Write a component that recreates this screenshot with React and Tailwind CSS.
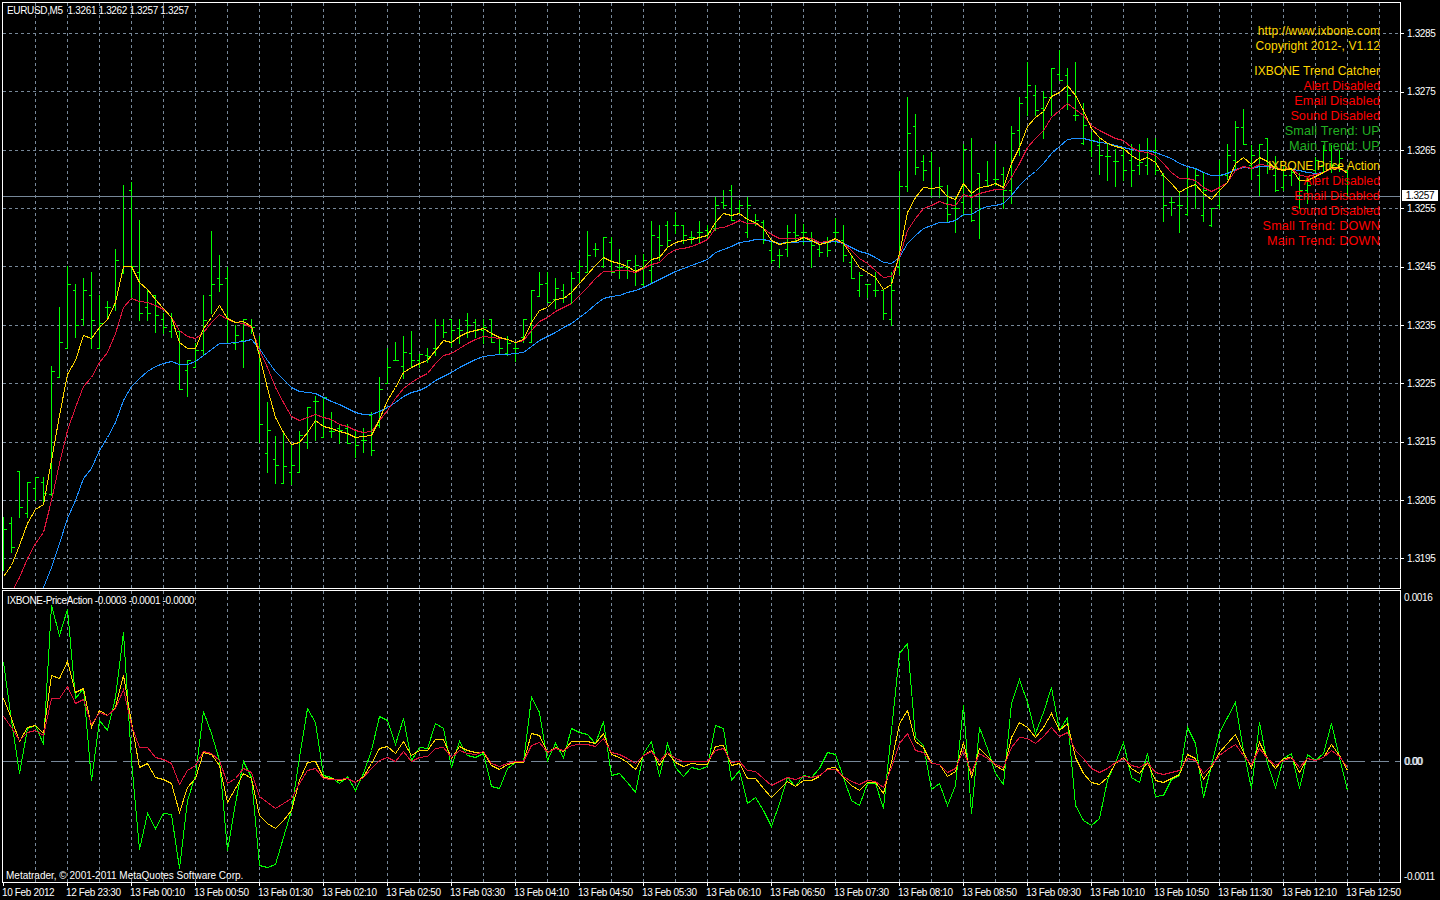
const TIMES = ['10 Feb 2012', '12 Feb 23:30', '13 Feb 00:10', '13 Feb 00:50', '13 Feb 01:30', '13 Feb 02:10', '13 Feb 02:50', '13 Feb 03:30', '13 Feb 04:10', '13 Feb 04:50', '13 Feb 05:30', '13 Feb 06:10', '13 Feb 06:50', '13 Feb 07:30', '13 Feb 08:10', '13 Feb 08:50', '13 Feb 09:30', '13 Feb 10:10', '13 Feb 10:50', '13 Feb 11:30', '13 Feb 12:10', '13 Feb 12:50']
const PRICES = ['1.3285', '1.3275', '1.3265', '1.3255', '1.3245', '1.3235', '1.3225', '1.3215', '1.3205', '1.3195']

const INFO = [
  { t: 'http://www.ixbone.com', c: 'text-[#ffd700] tracking-[0.1px]' },
  { t: 'Copyright 2012-, V1.12', c: 'text-[#ffd700] tracking-[0.05px] mb-[10px]' },
  { t: 'IXBONE Trend Catcher', c: 'text-[#ffd700] tracking-[0.05px]' },
  { t: 'Alert Disabled', c: 'text-[#ff0000] text-[12.3px]' },
  { t: 'Email Disabled', c: 'text-[#ff0000] text-[12.7px] tracking-[0.08px]' },
  { t: 'Sound Disabled', c: 'text-[#ff0000] text-[12.7px]' },
  { t: 'Small Trend: UP', c: 'text-[#22b022] text-[12.7px] tracking-[0.2px]' },
  { t: 'Main Trend: UP', c: 'text-[#22b022] text-[12.7px] tracking-[0.2px] mb-[5px]' },
  { t: 'IXBONE Price Action', c: 'text-[#ffd700]' },
  { t: 'Alert Disabled', c: 'text-[#ff0000] text-[12.3px]' },
  { t: 'Email Disabled', c: 'text-[#ff0000] text-[12.7px] tracking-[0.08px]' },
  { t: 'Sound Disabled', c: 'text-[#ff0000] text-[12.7px]' },
  { t: 'Small Trend: DOWN', c: 'text-[#ff0000] text-[12.7px] tracking-[0.15px]' },
  { t: 'Main Trend: DOWN', c: 'text-[#ff0000] text-[12.7px] tracking-[0.15px]' },
]

// high, low, left tick, right tick (pixel rows)
const BARS = [
  [517,570,569,529],[517,552,523,547],[471,517,471,507],[482,517,513,482],[477,500,488,477],[477,503,482,493],[366,495,494,371],[307,377,377,342],
  [266,348,348,284],[284,337,290,325],[278,325,319,290],[272,348,295,320],[295,348,348,323],[301,319,307,307],[249,310,305,260],[185,273,273,266],
  [182,298,190,266],[220,320,272,313],[289,320,307,313],[295,332,295,315],[313,333,319,327],[313,337,331,325],[331,389,331,389],[360,396,370,360],
  [343,367,367,350],[295,355,350,320],[231,313,295,284],[255,291,278,284],[267,343,278,343],[325,349,343,335],[319,367,340,319],[319,333,325,327],
  [336,442,350,424],[402,472,453,430],[436,483,459,465],[432,483,483,466],[444,484,472,465],[431,472,472,435],[407,448,442,407],[396,440,401,401],
  [397,437,437,397],[412,437,431,431],[424,443,428,430],[424,443,428,443],[431,457,436,445],[428,452,440,440],[412,455,415,450],[377,427,425,389],
  [348,383,383,367],[342,360,360,360],[336,378,366,352],[331,367,353,360],[354,367,360,354],[348,362,355,356],[319,355,348,325],[319,337,325,332],
  [319,346,319,330],[319,343,328,330],[313,337,320,325],[319,337,322,330],[319,343,330,327],[319,342,319,342],[337,354,338,348],[336,355,353,343],
  [342,361,348,348],[319,342,337,319],[290,342,342,290],[272,296,296,284],[272,302,283,302],[278,308,299,288],[284,302,290,297],[272,303,293,278],
  [260,282,272,266],[231,272,272,255],[243,256,249,249],[237,267,266,237],[237,272,242,272],[249,278,267,267],[260,278,267,260],[255,285,272,265],
  [254,285,284,260],[221,283,270,235],[225,260,237,245],[221,247,225,240],[212,233,225,225],[225,243,225,235],[231,243,237,237],[221,243,232,232],
  [225,237,230,232],[196,230,228,205],[190,208,202,205],[185,220,190,220],[200,213,208,205],[197,237,232,205],[214,225,222,220],[220,243,222,240],
  [240,262,250,260],[249,267,255,255],[225,256,249,232],[214,242,232,235],[224,244,232,232],[232,267,240,245],[244,256,249,252],[237,256,242,250],
  [218,243,232,232],[225,261,240,255],[255,278,262,278],[272,296,290,275],[284,297,284,284],[272,296,290,290],[289,319,290,313],[272,325,319,290],
  [171,274,267,186],[97,191,186,133],[114,174,126,167],[155,180,161,170],[152,197,161,188],[167,197,187,186],[185,221,203,214],[197,232,208,208],
  [144,215,202,149],[138,221,195,220],[173,238,173,208],[161,186,180,185],[144,185,179,179],[167,208,174,190],[126,203,190,133],[97,155,130,103],
  [62,115,97,85],[85,115,95,110],[91,138,108,97],[68,115,97,68],[50,80,74,80],[68,109,75,95],[62,120,115,115],[103,144,143,125],
  [132,156,150,140],[137,174,145,155],[144,180,156,156],[149,186,161,161],[149,180,155,170],[144,186,160,170],[144,174,165,162],[138,174,165,150],
  [138,174,150,170],[173,221,175,205],[196,215,202,202],[191,232,205,205],[168,215,214,179],[168,208,185,175],[173,221,215,190],[208,226,225,208],
  [160,208,205,175],[144,179,175,155],[121,170,160,127],[109,144,127,144],[145,179,165,155],[144,196,175,144],[138,173,138,165],[156,191,175,190],
  [167,190,187,175],[168,185,175,172],[173,208,178,190],[178,203,190,185],[157,173,170,160],[145,172,165,150],[145,172,150,165],[150,171,165,158],
  [170,197,170,196],
]

const MA_YELLOW = [576,565,545,523,509,504,460,415,374,360,335,338,327,319,302,266,266,282,289,299,308,317,342,348,348,328,317,305,318,322,321,326,355,388,417,432,444,442,432,420,426,428,431,433,437,436,435,419,400,387,372,367,363,360,350,340,342,336,332,330,328,333,337,339,342,339,322,310,307,299,298,292,283,274,265,257,261,263,266,271,267,259,257,247,242,240,239,237,235,222,213,215,213,219,222,228,240,244,242,241,237,240,244,242,238,243,255,267,272,277,289,284,253,212,197,187,188,187,196,199,183,193,187,186,183,187,163,147,126,117,111,96,92,85,95,110,128,137,143,146,148,155,160,157,162,175,183,192,187,184,193,199,190,182,163,157,164,157,161,168,170,168,180,180,176,172,167,167,173]
const MA_RED = [610,592,577,558,543,532,500,463,430,407,386,377,362,352,333,307,298,301,302,305,309,317,330,336,338,332,322,314,319,322,323,327,350,367,387,402,416,420,417,414,417,419,424,426,430,432,431,420,410,398,388,382,377,373,363,355,353,348,343,339,336,337,338,339,342,340,330,321,317,311,307,303,295,287,278,271,271,270,270,272,268,264,262,254,249,248,246,243,239,228,227,224,220,223,223,228,234,238,238,238,237,238,242,241,239,243,250,258,263,270,277,276,257,230,218,208,205,201,204,205,194,197,193,191,189,189,177,163,147,138,130,117,110,103,109,115,125,130,134,138,140,147,151,152,155,163,172,178,178,180,187,191,187,182,170,166,168,164,165,168,169,168,175,176,174,172,168,168,172]
const MA_BLUE = [700,680,660,640,612,587,567,543,518,500,478,468,450,437,422,400,386,378,371,366,363,361,364,364,361,355,349,343,343,342,341,339,348,360,371,379,387,391,392,393,397,401,404,408,412,414,414,411,407,402,396,392,390,386,380,376,372,367,363,359,356,355,354,354,353,352,346,340,336,332,327,323,317,311,304,298,296,295,292,290,287,283,279,275,271,268,265,262,259,252,249,246,242,241,239,239,241,243,242,242,241,241,242,242,241,243,247,251,253,257,262,263,257,243,235,228,225,222,222,220,214,214,209,206,205,203,195,185,177,171,163,153,146,139,138,138,140,142,143,145,147,149,150,150,152,155,158,163,166,168,172,175,175,173,169,167,168,166,166,168,169,169,170,172,173,172,168,168,172]

const PA_GREEN = [662,720,773,728,725,744,605,635,609,698,688,780,720,730,697,632,760,849,813,828,813,814,868,800,775,711,733,760,850,803,761,777,865,867,864,837,810,757,708,722,775,777,783,776,790,773,750,716,720,744,718,760,747,748,723,728,767,741,755,757,753,786,788,768,762,762,697,712,760,743,757,728,732,734,743,721,775,773,782,792,753,741,776,743,767,776,767,769,766,725,728,780,770,803,797,810,826,803,777,786,775,777,768,752,754,777,800,805,783,783,808,730,653,643,737,745,789,783,805,785,705,813,727,748,773,784,703,679,702,733,712,687,730,717,805,820,825,818,780,762,742,777,782,753,796,795,779,775,727,743,797,765,732,717,702,750,788,722,763,787,758,753,788,754,760,753,723,757,790]
const PA_YELLOW = [698,718,741,727,725,733,675,678,661,692,688,727,710,715,707,675,722,767,763,777,779,783,812,787,778,752,754,765,802,788,773,778,815,823,828,820,810,780,762,761,777,778,780,778,782,776,763,748,746,753,741,755,750,750,739,739,758,746,750,752,752,765,769,764,762,762,733,735,752,747,751,741,741,741,743,733,754,757,762,769,755,750,765,752,762,766,763,764,764,746,745,765,763,778,778,788,797,789,781,786,780,780,776,768,767,777,785,790,782,782,793,762,723,710,741,747,763,764,776,771,742,777,748,756,765,770,737,722,727,737,727,713,730,723,757,773,782,784,777,763,757,768,773,762,780,782,778,774,754,758,779,767,752,743,734,752,767,742,758,768,758,757,772,758,760,757,744,755,770]
const PA_RED = [716,727,740,732,730,735,698,698,686,703,699,724,712,715,708,689,725,747,747,757,759,763,784,770,765,751,753,760,783,778,768,772,796,802,808,803,798,783,770,768,778,779,779,778,782,777,768,760,757,761,751,761,757,756,748,747,757,750,753,754,751,763,766,763,761,761,745,742,752,748,750,745,744,744,746,738,752,754,758,763,755,751,761,752,758,761,761,761,761,750,748,762,761,770,771,778,785,781,777,779,776,777,775,769,769,776,781,784,780,781,787,767,743,733,750,752,763,764,772,768,750,772,753,758,764,767,747,737,738,743,736,727,736,732,750,758,768,772,768,762,758,765,767,762,772,774,772,770,758,760,773,765,755,749,744,755,764,748,758,765,760,757,767,758,760,757,750,756,767]

const barX = (k) => 3 + 8 * k
const pts = (ys) => ys.map((y, k) => `${barX(k) + 0.5},${y + 0.5}`).join(' ')

const barsPath = BARS.map(([hi, lo, l, r], k) => {
  const x = barX(k) + 0.5
  return `M${x} ${hi}V${lo + 1}M${x - 2.5} ${l + 0.5}H${x}M${x} ${r + 0.5}H${x + 3}`
}).join('')

const VERTS = Array.from({ length: 43 }, (_, i) => 35 + 32 * i)
const HORIZ = [33, 91, 150, 208, 266, 325, 383, 442, 500, 558]

function Line({ ys, color }) {
  return <polyline points={pts(ys)} fill="none" stroke={color} strokeWidth="1" />
}

function MainChart() {
  return (
    <svg viewBox="3 3 1397 585" width="1397" height="585" shapeRendering="crispEdges" className="block">
      {VERTS.map((x) => <line key={x} x1={x + 0.5} x2={x + 0.5} y1="3" y2="588" stroke="#778899" strokeDasharray="3 3" />)}
      {HORIZ.map((y) => <line key={y} x1="3" x2="1400" y1={y + 0.5} y2={y + 0.5} stroke="#778899" strokeDasharray="3 3" />)}
      <path d={barsPath} fill="none" stroke="#00ff00" strokeWidth="1" />
      <line x1="3" x2="1400" y1="196.5" y2="196.5" stroke="#778899" />
      <Line ys={MA_BLUE} color="#1e90ff" />
      <Line ys={MA_RED} color="#dc143c" />
      <Line ys={MA_YELLOW} color="#ffd700" />
    </svg>
  )
}

function SubChart() {
  return (
    <svg viewBox="3 591 1397 291" width="1397" height="291" shapeRendering="crispEdges" className="block">
      {VERTS.map((x) => <line key={x} x1={x + 0.5} x2={x + 0.5} y1="591" y2="882" stroke="#778899" strokeDasharray="3 3" />)}
      <line x1="3" x2="1400" y1="761.5" y2="761.5" stroke="#778899" strokeDasharray="18 6" />
      <Line ys={PA_GREEN} color="#00ff00" />
      <Line ys={PA_YELLOW} color="#ffd700" />
      <Line ys={PA_RED} color="#dc143c" />
    </svg>
  )
}

export default function App() {
  return (
    <div className="w-[1440px] h-[900px] bg-black overflow-hidden text-white text-[10px] leading-[12px] [font-family:'Liberation_Sans',Arial,sans-serif]">
      <div className="flex h-[589px] pt-[2px] pl-[2px]">
        <div className="relative w-[1399px] h-[587px] border border-white">
          <MainChart />
          <div className="absolute left-[4px] top-[2px] tracking-[-0.35px]">EURUSD,M5 &nbsp;1.3261 1.3262 1.3257 1.3257</div>
          <div className="absolute right-[20px] top-[21px] flex flex-col items-end text-[12px] leading-[15px]">
            {INFO.map((row, i) => <div key={i} className={row.c}>{row.t}</div>)}
          </div>
        </div>
        <div className="relative w-[39px] pt-[2.83px] tracking-[-0.35px]">
          {PRICES.map((p) => (
            <div key={p} className="flex items-center h-[58.33px]">
              <span className="w-[3px] h-px bg-white mr-[3px]" />
              <span>{p}</span>
            </div>
          ))}
          <div className="absolute left-px top-[188px] w-[36px] h-[11px] bg-white text-black leading-[11px] text-center">1.3257</div>
        </div>
      </div>
      <div className="flex mt-px pl-[2px]">
        <div className="relative w-[1399px] h-[293px] border border-white">
          <SubChart />
          <div className="absolute left-[4px] top-[4px] tracking-[-0.35px]">IXBONE-PriceAction -0.0003 -0.0001 -0.0000</div>
          <div className="absolute left-[3px] bottom-0">Metatrader, © 2001-2011 MetaQuotes Software Corp.</div>
        </div>
        <div className="flex flex-col w-[39px] h-[293px] pl-[3px] pt-[2px] tracking-[-0.35px]">
          <span>0.0016</span>
          <span className="mt-[152px] [text-shadow:1px_0_0_#cfe4ff]">0.00</span>
          <span className="mt-[103px]">-0.0011</span>
        </div>
      </div>
      <div className="flex pl-[3px] tracking-[-0.35px]">
        {TIMES.map((t, i) => (
          <div key={i} className="w-[64px] shrink-0">
            <div className="w-px h-[3px] bg-white" />
            <div className="whitespace-nowrap mt-px -ml-px">{t}</div>
          </div>
        ))}
      </div>
    </div>
  )
}
